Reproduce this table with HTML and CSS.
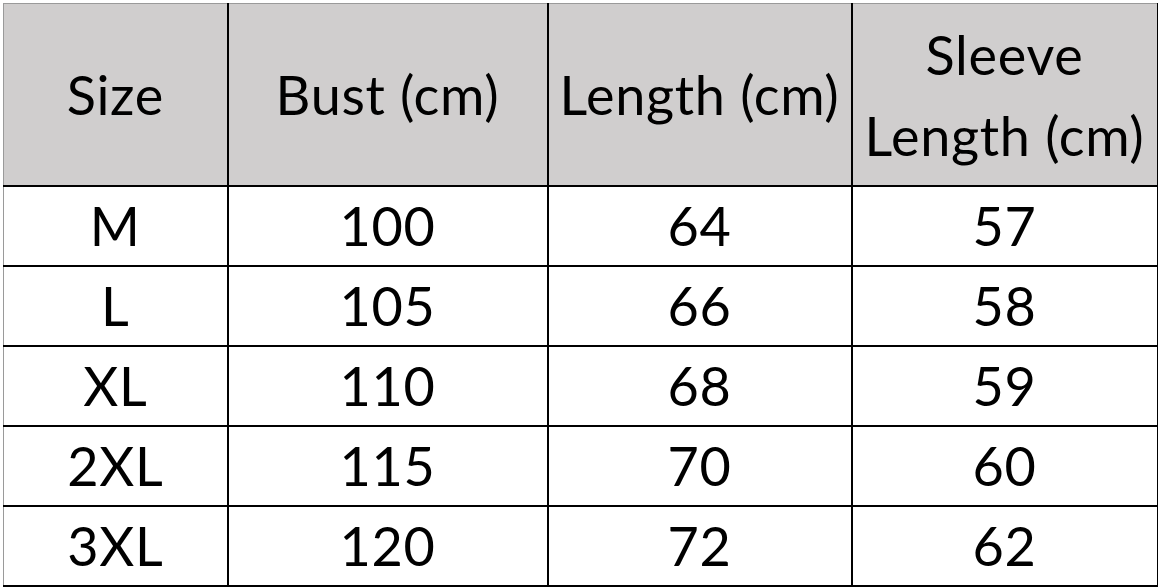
FILE: index.html
```html
<!DOCTYPE html>
<html>
<head>
<meta charset="utf-8">
<link rel="stylesheet" href="styles.css">
</head>
<body>
<table class="size-table">
  <colgroup>
    <col class="c1"><col class="c2"><col class="c3"><col class="c4">
  </colgroup>
  <thead>
    <tr>
      <th>Size</th>
      <th>Bust (cm)</th>
      <th>Length (cm)</th>
      <th>Sleeve<br>Length (cm)</th>
    </tr>
  </thead>
  <tbody>
    <tr><td>M</td><td>100</td><td>64</td><td>57</td></tr>
    <tr><td>L</td><td>105</td><td>66</td><td>58</td></tr>
    <tr><td>XL</td><td>110</td><td>68</td><td>59</td></tr>
    <tr><td>2XL</td><td>115</td><td>70</td><td>60</td></tr>
    <tr><td>3XL</td><td>120</td><td>72</td><td>62</td></tr>
  </tbody>
</table>
</body>
</html>
```
FILE: styles.css
```css
html, body {
  margin: 0;
  padding: 0;
  background: #ffffff;
}
body {
  padding: 3px 0 0 3px;
}
.size-table {
  border-collapse: collapse;
  table-layout: fixed;
  width: 1154px;
  font-family: Lato, "Open Sans", sans-serif;
  color: #000;
  border-top: 1px solid #9a9a9a;
  border-left: 1px solid #9a9a9a;
}
.c1 { width: 224px; }
.c2 { width: 320px; }
.c3 { width: 304px; }
.c4 { width: 306px; }
.size-table th,
.size-table td {
  border: 2px solid #000;
  text-align: center;
  vertical-align: middle;
  padding: 0;
  font-weight: 400;
  font-size: 54px;
  letter-spacing: 0.7px;
}
.size-table tr:first-child th { border-top: 1px solid #9a9a9a; }
.size-table th:first-child,
.size-table td:first-child { border-left: 1px solid #9a9a9a; }
.size-table th {
  background: #d0cece;
  height: 181px;
  line-height: 81px;
}
.size-table td {
  height: 78px;
  line-height: 78px;
}
```
